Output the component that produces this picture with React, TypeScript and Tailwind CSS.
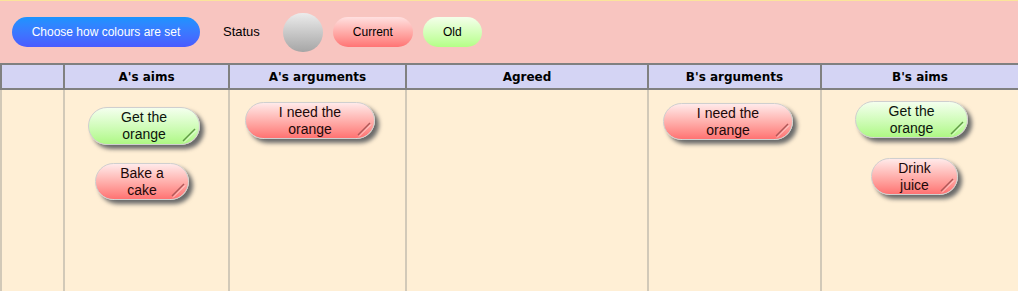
import React from "react";

type NoteProps = {
  lines: [string, string];
  color: "green" | "red";
  w: string;
  cls: string;
};

function Note({ lines, color, w, cls }: NoteProps) {
  const bg =
    color === "green"
      ? "bg-gradient-to-b from-[#f4ffee] to-[#aef884] text-[#0c140c]"
      : "bg-gradient-to-b from-[#ffeaea] to-[#ff7272] text-[#1c0808]";
  const dark = color === "green" ? "#5f9a45" : "#b05858";
  return (
    <div
      className={`relative flex h-[37px] flex-col items-center justify-center rounded-full border border-[#cfcfcf] ${bg} ${w} ${cls} shadow-[4px_4px_4px_#6a6a6a] text-[14px] leading-[17px] [font-family:'Liberation_Sans',Arial,sans-serif]`}
    >
      <span>{lines[0]}</span>
      <span>{lines[1]}</span>
      <svg className="absolute bottom-[1px] right-[2px]" width="16" height="16" viewBox="0 0 16 16">
        <line x1="2" y1="14" x2="14" y2="2" stroke={dark} strokeWidth="1.5" />
        <line x1="3" y1="15.5" x2="15" y2="3.5" stroke="#ffffff" strokeOpacity="0.6" strokeWidth="1" />
      </svg>
    </div>
  );
}

const headers = [
  { label: "", w: "w-[63px]" },
  { label: "A's aims", w: "w-[165px]" },
  { label: "A's arguments", w: "w-[177px]" },
  { label: "Agreed", w: "w-[242px]" },
  { label: "B's arguments", w: "w-[173px]" },
  { label: "B's aims", w: "w-[198px]" },
];

export default function App() {
  return (
    <div className="w-[1018px] h-[291px] overflow-hidden bg-[#ffefd5] [font-family:'Liberation_Sans',Arial,sans-serif]">
      {/* Top bar */}
      <div className="flex h-[63px] items-center border-t border-[#fbe49a] bg-[#f8c5c0] pl-[12px]">
        <button className="h-[30px] w-[188px] rounded-full bg-gradient-to-b from-[#1a94ff] to-[#4a5aff] text-[12px] text-white">
          Choose how colours are set
        </button>
        <span className="ml-[23px] text-[13px] text-black">Status</span>
        <div className="ml-[23px] h-[39px] w-[40px] rounded-full bg-gradient-to-b from-[#ececec] to-[#a6a6a6]" />
        <div className="ml-[10px] flex h-[30px] w-[80px] items-center justify-center rounded-full bg-gradient-to-b from-[#ffe0e0] to-[#ff7474] text-[12px] text-black">
          Current
        </div>
        <div className="ml-[10px] flex h-[30px] w-[59px] items-center justify-center rounded-full bg-gradient-to-b from-[#f4ffea] to-[#b4ff86] text-[12px] text-black">
          Old
        </div>
      </div>

      {/* Header row */}
      <div className="flex h-[27px] border-y-2 border-[#808080] bg-[#d4d4f4]">
        {headers.map((h, i) => (
          <div
            key={i}
            className={`${h.w} flex items-center justify-center border-l-2 border-[#808080] text-[12px] font-bold text-black [font-family:'DejaVu_Sans',Verdana,sans-serif]`}
          >
            {h.label}
          </div>
        ))}
      </div>

      {/* Body */}
      <div className="flex h-[201px]">
        <div className="w-[63px] border-l-2 border-[#d2c9b8]" />
        <div className="flex w-[165px] flex-col items-start border-l-2 border-[#d2c9b8]">
          <Note lines={["Get the", "orange"]} color="green" w="w-[112px] h-[38px]" cls="ml-[23px] mt-[17px]" />
          <Note lines={["Bake a", "cake"]} color="red" w="w-[94px]" cls="ml-[30px] mt-[18px]" />
        </div>
        <div className="flex w-[177px] flex-col items-start border-l-2 border-[#d2c9b8]">
          <Note lines={["I need the", "orange"]} color="red" w="w-[130px]" cls="ml-[15px] mt-[12px]" />
        </div>
        <div className="w-[242px] border-l-2 border-[#d2c9b8]" />
        <div className="flex w-[173px] flex-col items-start border-l-2 border-[#d2c9b8]">
          <Note lines={["I need the", "orange"]} color="red" w="w-[130px]" cls="ml-[14px] mt-[13px]" />
        </div>
        <div className="flex w-[198px] flex-col items-start border-l-2 border-[#d2c9b8]">
          <Note lines={["Get the", "orange"]} color="green" w="w-[113px]" cls="ml-[33px] mt-[11px]" />
          <Note lines={["Drink", "juice"]} color="red" w="w-[87px]" cls="ml-[49px] mt-[20px]" />
        </div>
      </div>
    </div>
  );
}
